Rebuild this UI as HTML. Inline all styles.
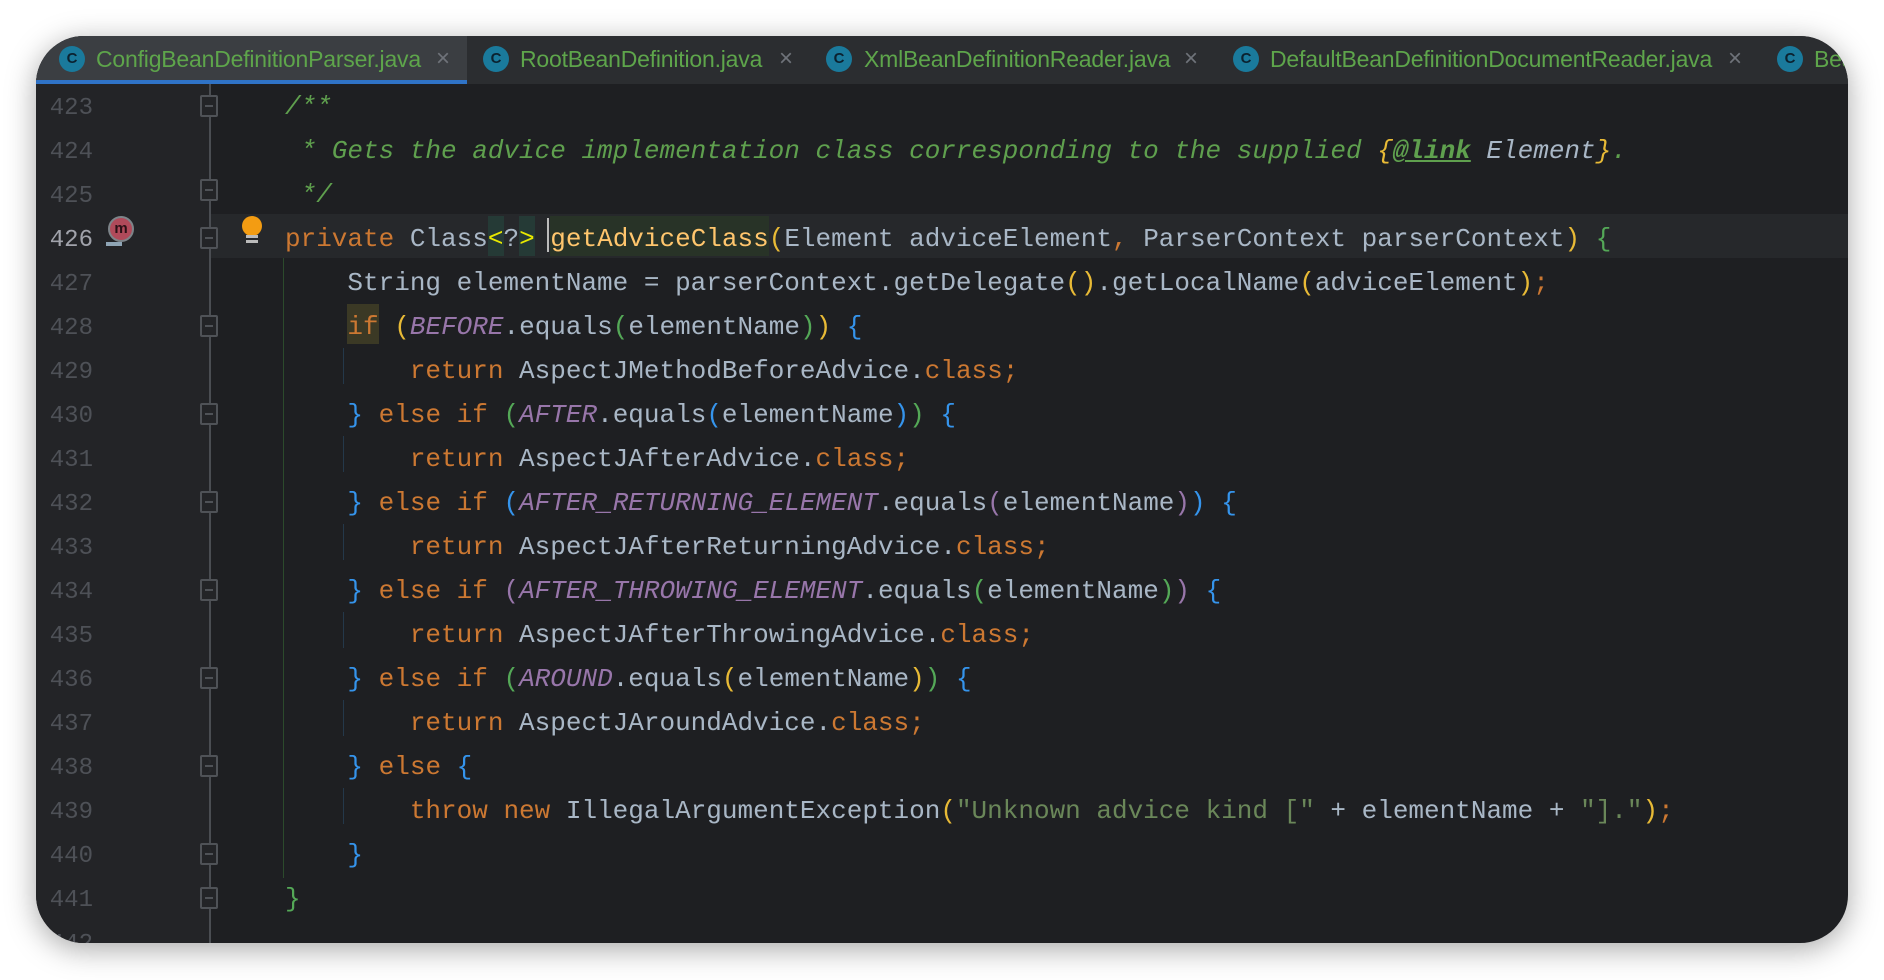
<!DOCTYPE html>
<html><head><meta charset="utf-8"><style>
body{margin:0;width:1884px;height:980px;background:#fff;overflow:hidden;position:relative}
#win{position:absolute;left:36px;top:36px;width:1812px;height:907px;border-radius:48px;overflow:hidden;background:#1e1f22;box-shadow:0 6px 30px rgba(0,0,0,.35)}
#tabs{position:absolute;left:0;top:0;width:100%;height:48px;background:#2b2d30}
.tab{position:absolute;top:0;height:48px;font:23px "Liberation Sans",sans-serif;color:#5ea54b;line-height:46px;white-space:nowrap;letter-spacing:-0.2px}
.ic{position:absolute;top:10px;width:26px;height:26px;border-radius:50%;background:#1a7a9c;color:#0b2230;font:bold 15px "Liberation Sans",sans-serif;text-align:center;line-height:26px}
.x{position:absolute;color:#6f737a;font:24px "Liberation Sans",sans-serif;top:0}
#gut{position:absolute;left:0;top:48px;width:174px;height:900px;background:#232427}
.ln{position:absolute;left:0;width:57px;text-align:right;font:24px "Liberation Mono",monospace;color:#4e5157}
.code{position:absolute;left:249px;font:26px "Liberation Mono",monospace;color:#a9b7c6;white-space:pre;letter-spacing:0px}
.k{color:#cc7832}.c{color:#5fa04e;font-style:italic}.p{color:#9876aa;font-style:italic}.s{color:#6a8759}
.y{color:#e8ba36}.g{color:#54a857}.b{color:#3594ec}.v{color:#9876aa}
.f{position:absolute;left:164px;width:18px;height:22px;border:2px solid #4f5257;box-sizing:border-box;background:#232427;border-radius:2px}
.f:after{content:"";position:absolute;left:3px;top:8px;width:8px;height:2px;background:#4f5257}
</style></head><body>
<div id="win">
<div id="tabs">
 <div style="position:absolute;left:0;top:0;width:431px;height:48px;background:#3b3e42"></div>
 <div style="position:absolute;left:0;top:44px;width:431px;height:4px;background:#2f73c7"></div>
 <div class="ic" style="left:23px">C</div><div class="tab" style="left:60px">ConfigBeanDefinitionParser.java</div><div class="x" style="left:400px;line-height:46px">×</div>
 <div class="ic" style="left:447px">C</div><div class="tab" style="left:484px">RootBeanDefinition.java</div><div class="x" style="left:743px;line-height:46px">×</div>
 <div class="ic" style="left:790px">C</div><div class="tab" style="left:828px">XmlBeanDefinitionReader.java</div><div class="x" style="left:1148px;line-height:46px">×</div>
 <div class="ic" style="left:1197px">C</div><div class="tab" style="left:1234px">DefaultBeanDefinitionDocumentReader.java</div><div class="x" style="left:1692px;line-height:46px">×</div>
 <div class="ic" style="left:1741px">C</div><div class="tab" style="left:1778px">Bea</div>
</div>
<div id="gut"></div>
<div style="position:absolute;left:174px;top:178px;width:1640px;height:44px;background:#26282b"></div>
<div style="position:absolute;left:173px;top:48px;width:2px;height:860px;background:#4a4d52"></div>
<div style="position:absolute;left:247px;top:222px;width:1px;height:620px;background:#2c4a2c"></div>
<div style="position:absolute;left:307px;top:312px;width:1px;height:36px;background:#24384a"></div>
<div style="position:absolute;left:307px;top:400px;width:1px;height:36px;background:#24384a"></div>
<div style="position:absolute;left:307px;top:488px;width:1px;height:36px;background:#24384a"></div>
<div style="position:absolute;left:307px;top:576px;width:1px;height:36px;background:#24384a"></div>
<div style="position:absolute;left:307px;top:664px;width:1px;height:36px;background:#24384a"></div>
<div style="position:absolute;left:307px;top:752px;width:1px;height:36px;background:#24384a"></div>
<!-- line numbers -->
<div class="ln" style="top:59px">423</div><div class="ln" style="top:103px">424</div><div class="ln" style="top:147px">425</div>
<div class="ln" style="top:191px;color:#a1a3ab">426</div><div class="ln" style="top:235px">427</div><div class="ln" style="top:279px">428</div>
<div class="ln" style="top:323px">429</div><div class="ln" style="top:367px">430</div><div class="ln" style="top:411px">431</div>
<div class="ln" style="top:455px">432</div><div class="ln" style="top:499px">433</div><div class="ln" style="top:543px">434</div>
<div class="ln" style="top:587px">435</div><div class="ln" style="top:631px">436</div><div class="ln" style="top:675px">437</div>
<div class="ln" style="top:719px">438</div><div class="ln" style="top:763px">439</div><div class="ln" style="top:807px">440</div>
<div class="ln" style="top:851px">441</div><div class="ln" style="top:895px">442</div>
<!-- fold markers -->
<div class="f" style="top:59px"></div><div class="f" style="top:143px"></div><div class="f" style="top:191px"></div>
<div class="f" style="top:279px"></div><div class="f" style="top:367px"></div><div class="f" style="top:455px"></div>
<div class="f" style="top:543px"></div><div class="f" style="top:631px"></div><div class="f" style="top:719px"></div>
<div class="f" style="top:807px"></div><div class="f" style="top:851px"></div>
<!-- m icon -->
<div style="position:absolute;left:72px;top:180px;width:26px;height:26px;border-radius:50%;border:2px solid #7d8489;box-sizing:border-box;background:#b04a5a;color:#2a1015;font:bold 15px 'Liberation Sans',sans-serif;text-align:center;line-height:21px">m</div>
<div style="position:absolute;left:70px;top:206px;width:16px;height:4px;background:#8fa5b5"></div>
<!-- bulb -->
<div style="position:absolute;left:206px;top:180px;width:20px;height:20px;border-radius:50%;background:#f39c12"></div>
<div style="position:absolute;left:210px;top:199px;width:12px;height:3px;background:#bbb"></div>
<div style="position:absolute;left:210px;top:204px;width:12px;height:3px;background:#bbb"></div>
<!-- highlights -->
<div style="position:absolute;left:452px;top:180px;width:16px;height:40px;background:#253a36"></div>
<div style="position:absolute;left:483px;top:180px;width:16px;height:40px;background:#253a36"></div>
<div style="position:absolute;left:514px;top:180px;width:219px;height:40px;background:#283327"></div>
<div style="position:absolute;left:511px;top:182px;width:2px;height:34px;background:#bbb"></div>
<div style="position:absolute;left:311px;top:268px;width:32px;height:40px;background:#3b3925"></div>
<!-- code -->
<div class="code" style="top:56px"><span class="c">/**</span></div>
<div class="code" style="top:100px"><span class="c"> * Gets the advice implementation class corresponding to the supplied </span><span class="y" style="font-style:italic">{</span><span class="c" style="text-decoration:underline;font-weight:bold">@link</span><span style="font-style:italic"> Element</span><span class="y" style="font-style:italic">}</span><span class="c">.</span></div>
<div class="code" style="top:144px"><span class="c"> */</span></div>
<div class="code" style="top:188px"><span class="k">private</span> Class<span style="color:#e8e800">&lt;</span>?<span style="color:#e8e800">&gt;</span> <span style="color:#ffc66d">getAdviceClass</span><span class="y">(</span>Element adviceElement<span class="k">,</span> ParserContext parserContext<span class="y">)</span> <span class="g">{</span></div>
<div class="code" style="top:232px">    String elementName = parserContext.getDelegate<span class="y">()</span>.getLocalName<span class="y">(</span>adviceElement<span class="y">)</span><span class="k">;</span></div>
<div class="code" style="top:276px">    <span class="k">if</span> <span class="y">(</span><span class="p">BEFORE</span>.equals<span class="g">(</span>elementName<span class="g">)</span><span class="y">)</span> <span class="b">{</span></div>
<div class="code" style="top:320px">        <span class="k">return</span> AspectJMethodBeforeAdvice.<span class="k">class;</span></div>
<div class="code" style="top:364px">    <span class="b">}</span> <span class="k">else if</span> <span class="g">(</span><span class="p">AFTER</span>.equals<span class="b">(</span>elementName<span class="b">)</span><span class="g">)</span> <span class="b">{</span></div>
<div class="code" style="top:408px">        <span class="k">return</span> AspectJAfterAdvice.<span class="k">class;</span></div>
<div class="code" style="top:452px">    <span class="b">}</span> <span class="k">else if</span> <span class="b">(</span><span class="p">AFTER_RETURNING_ELEMENT</span>.equals<span class="v">(</span>elementName<span class="v">)</span><span class="b">)</span> <span class="b">{</span></div>
<div class="code" style="top:496px">        <span class="k">return</span> AspectJAfterReturningAdvice.<span class="k">class;</span></div>
<div class="code" style="top:540px">    <span class="b">}</span> <span class="k">else if</span> <span class="v">(</span><span class="p">AFTER_THROWING_ELEMENT</span>.equals<span class="g">(</span>elementName<span class="g">)</span><span class="v">)</span> <span class="b">{</span></div>
<div class="code" style="top:584px">        <span class="k">return</span> AspectJAfterThrowingAdvice.<span class="k">class;</span></div>
<div class="code" style="top:628px">    <span class="b">}</span> <span class="k">else if</span> <span class="g">(</span><span class="p">AROUND</span>.equals<span class="y">(</span>elementName<span class="y">)</span><span class="g">)</span> <span class="b">{</span></div>
<div class="code" style="top:672px">        <span class="k">return</span> AspectJAroundAdvice.<span class="k">class;</span></div>
<div class="code" style="top:716px">    <span class="b">}</span> <span class="k">else</span> <span class="b">{</span></div>
<div class="code" style="top:760px">        <span class="k">throw new</span> IllegalArgumentException<span class="y">(</span><span class="s">"Unknown advice kind ["</span> + elementName + <span class="s">"]."</span><span class="y">)</span><span class="k">;</span></div>
<div class="code" style="top:804px">    <span class="b">}</span></div>
<div class="code" style="top:848px"><span class="g">}</span></div>
</div>
</body></html>
